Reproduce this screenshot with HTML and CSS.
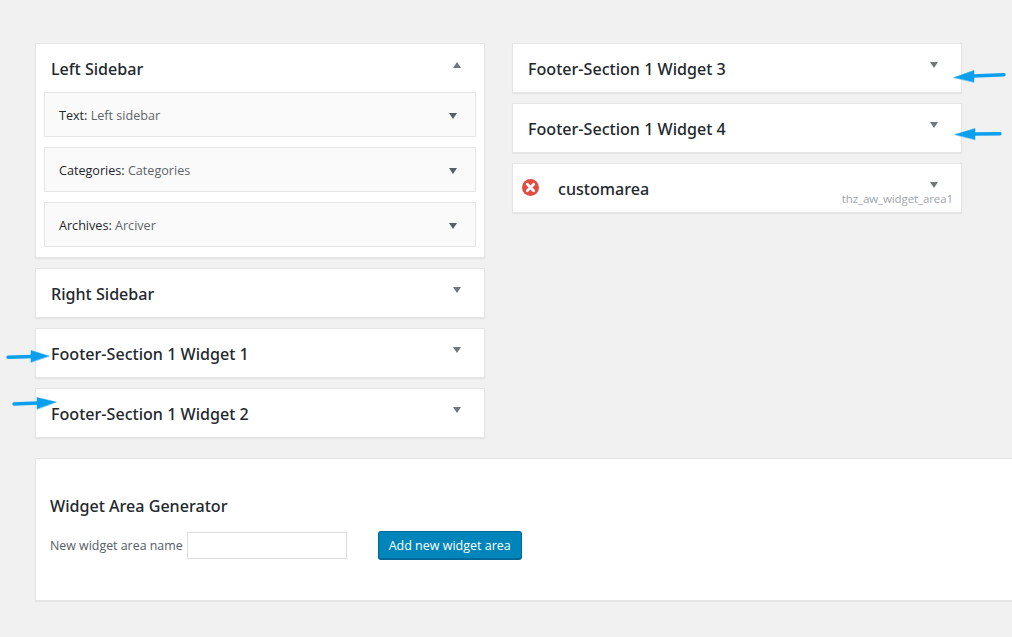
FILE: index.html
```html
<!DOCTYPE html>
<html lang="en">
<head>
<meta charset="utf-8">
<title>Widgets</title>
<link rel="stylesheet" href="styles.css">
</head>
<body>
<main class="page">
  <div class="columns">
    <section class="column">
      <div class="area">
        <div class="area-head"><h2 class="area-title">Left Sidebar</h2><span class="tri tri-up"></span></div>
        <div class="widgets">
          <div class="widget"><span class="widget-title"><b>Text:</b> Left sidebar</span><span class="tri tri-dark"></span></div>
          <div class="widget"><span class="widget-title"><b>Categories:</b> Categories</span><span class="tri tri-dark"></span></div>
          <div class="widget"><span class="widget-title"><b>Archives:</b> Arciver</span><span class="tri tri-dark"></span></div>
        </div>
      </div>
      <div class="area"><div class="area-head"><h2 class="area-title">Right Sidebar</h2><span class="tri"></span></div></div>
      <div class="area"><div class="area-head"><h2 class="area-title">Footer-Section 1 Widget 1</h2><span class="tri"></span></div></div>
      <div class="area"><div class="area-head"><h2 class="area-title">Footer-Section 1 Widget 2</h2><span class="tri"></span></div></div>
    </section>
    <section class="column">
      <div class="area"><div class="area-head"><h2 class="area-title">Footer-Section 1 Widget 3</h2><span class="tri"></span></div></div>
      <div class="area"><div class="area-head"><h2 class="area-title">Footer-Section 1 Widget 4</h2><span class="tri"></span></div></div>
      <div class="area">
        <div class="area-head area-head-custom">
          <svg class="remove" viewBox="0 0 16 16" aria-hidden="true"><circle cx="8" cy="8" r="8" fill="#e14d43"/><path d="M5 5l6 6M11 5l-6 6" stroke="#fff" stroke-width="2.6" stroke-linecap="round" fill="none"/></svg>
          <h2 class="area-title">customarea</h2>
          <div class="meta"><span class="tri"></span><span class="area-id">thz_aw_widget_area1</span></div>
        </div>
      </div>
    </section>
  </div>
  <section class="generator">
    <h2 class="gen-title">Widget Area Generator</h2>
    <form class="gen-form">
      <label class="gen-label" for="area-name">New widget area name</label>
      <input class="gen-input" id="area-name" type="text">
      <button class="gen-button" type="button">Add new widget area</button>
    </form>
  </section>
</main>
<svg class="arrows" width="1012" height="637" viewBox="0 0 1012 637" aria-hidden="true">
  <g fill="#0c9fee" stroke="#0c9fee" stroke-linecap="round">
    <path d="M1004 74.7L973 76" stroke-width="3.4" fill="none"/>
    <path d="M954 77.5L974 70.5L974 82Z" stroke-width=".5"/>
    <path d="M1000 133.7L974 134" stroke-width="3.4" fill="none"/>
    <path d="M955 134.5L975 128.5L975 139.5Z" stroke-width=".5"/>
    <path d="M8 357.2L32 356.5" stroke-width="3.4" fill="none"/>
    <path d="M49 356L31 350.5L31 362Z" stroke-width=".5"/>
    <path d="M14 404L38 403" stroke-width="3.4" fill="none"/>
    <path d="M56 402L37 397.5L37 409Z" stroke-width=".5"/>
  </g>
</svg>
</body>
</html>
```
FILE: styles.css
```css
* { box-sizing: border-box; }
html, body { margin: 0; height: 637px; overflow: hidden; }
body {
  position: relative;
  background: #f1f1f1;
  color: #23282d;
  font-family: "Open Sans", "Noto Sans", sans-serif;
}
.page { padding: 43px 0 0 35px; width: 1012px; }
.columns { display: flex; gap: 27px; align-items: flex-start; }
.column { width: 450px; display: flex; flex-direction: column; gap: 10px; }
.area {
  background: #fff;
  border: 1px solid #e5e5e5;
  box-shadow: 0 1px 1px rgba(0, 0, 0, .05);
}
.area-head {
  height: 48px;
  padding: 2px 23px 0 15px;
  display: flex;
  align-items: center;
  justify-content: space-between;
}
.area-head > .tri { margin-top: -9px; }
.area-title { margin: 0; font-family: "Noto Sans", "Open Sans", sans-serif; font-size: 16.1px; font-weight: 500; line-height: 1; color: #23282d; }
.tri {
  flex: none;
  width: 0; height: 0;
  border-left: 4.5px solid transparent;
  border-right: 4.5px solid transparent;
  border-top: 6.5px solid #72777c;
}
.tri-up { border-top: 0; border-bottom: 6.5px solid #72777c; }
.tri-dark { border-top-color: #555d66; }
.widgets { display: flex; flex-direction: column; gap: 10px; padding: 0 8px 10px; }
.widget {
  height: 45px;
  padding: 2px 18px 0 14px;
  display: flex;
  align-items: center;
  justify-content: space-between;
  background: #fafafa;
  border: 1px solid #e5e5e5;
  font-size: 12.6px;
}
.widget > .tri { margin-top: 1px; }
.widget-title { color: #5f646a; }
.widget-title b { font-weight: 500; color: #23282d; }
.area-head-custom { padding: 0 8px 0 9px; justify-content: flex-start; }
.area-head-custom .area-title { padding-top: 2px; }
.remove { width: 17px; height: 17px; flex: none; margin: -2px 19px 0 0; }
.meta { margin-left: auto; display: flex; flex-direction: column; align-items: flex-end; align-self: flex-start; padding-top: 18px; }
.meta .tri { margin-right: 15px; }
.area-id { margin-top: 4px; font-size: 11.5px; line-height: 14px; color: #a0a5aa; white-space: nowrap; letter-spacing: -.1px; }
.generator {
  margin-top: 20px;
  margin-right: -300px;
  height: 143px;
  padding: 37px 14px 0;
  background: #fff;
  border: 1px solid #e5e5e5;
  box-shadow: 0 1px 1px rgba(0, 0, 0, .05);
}
.gen-title { margin: 0; font-family: "Noto Sans", "Open Sans", sans-serif; font-size: 16.1px; font-weight: 500; line-height: 20px; color: #23282d; }
.gen-form { display: flex; align-items: center; margin-top: 15px; }
.gen-label { font-size: 12.4px; color: #555d66; margin-right: 4px; white-space: nowrap; }
.gen-input { width: 160px; height: 27px; background: #fff; border: 1px solid #ddd; padding: 0; margin: 0; }
.gen-button {
  margin-left: 31px;
  width: 144px;
  height: 29px;
  padding: 0;
  background: #0085ba;
  border: 1px solid #006799;
  border-bottom-width: 2px;
  border-radius: 3px;
  color: #fff;
  font-family: inherit;
  font-size: 12.5px;
}
.arrows { position: absolute; left: 0; top: 0; pointer-events: none; }
```
